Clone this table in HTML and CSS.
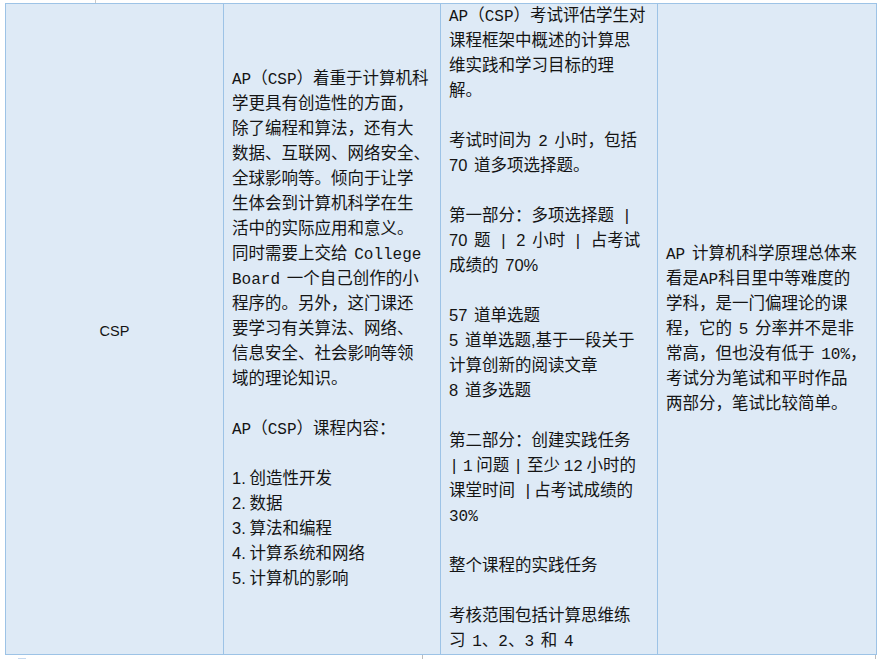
FILE: index.html
```html
<!DOCTYPE html>
<html lang="zh">
<head>
<meta charset="utf-8">
<link rel="stylesheet" href="styles.css">
</head>
<body>
<div class="topstrip"><span class="tick"></span></div>
<table class="grid">
  <colgroup>
    <col class="w1"><col class="w2"><col class="w3"><col class="w4">
  </colgroup>
  <tr>
    <td class="c1"><span class="csp">CSP</span></td>
    <td class="c2">
      <div class="ln"><span class="m">AP</span>（<span class="m">CSP</span>）着重于计算机科</div>
      <div class="ln">学更具有创造性的方面，</div>
      <div class="ln">除了编程和算法，还有大</div>
      <div class="ln">数据、互联网、网络安全、</div>
      <div class="ln">全球影响等。倾向于让学</div>
      <div class="ln">生体会到计算机科学在生</div>
      <div class="ln">活中的实际应用和意义。</div>
      <div class="ln">同时需要上交给 <span class="m">College</span></div>
      <div class="ln"><span class="m">Board</span> 一个自己创作的小</div>
      <div class="ln">程序的。另外，这门课还</div>
      <div class="ln">要学习有关算法、网络、</div>
      <div class="ln">信息安全、社会影响等领</div>
      <div class="ln">域的理论知识。</div>
      <div class="ln"></div>
      <div class="ln"><span class="m">AP</span>（<span class="m">CSP</span>）课程内容：</div>
      <div class="ln"></div>
      <div class="ln tight"><span class="s">1.</span> 创造性开发</div>
      <div class="ln tight"><span class="s">2.</span> 数据</div>
      <div class="ln tight"><span class="s">3.</span> 算法和编程</div>
      <div class="ln tight"><span class="s">4.</span> 计算系统和网络</div>
      <div class="ln tight"><span class="s">5.</span> 计算机的影响</div>
    </td>
    <td class="c3">
      <div class="ln"><span class="m">AP</span>（<span class="m">CSP</span>）考试评估学生对</div>
      <div class="ln">课程框架中概述的计算思</div>
      <div class="ln">维实践和学习目标的理</div>
      <div class="ln">解。</div>
      <div class="ln"></div>
      <div class="ln">考试时间为 <span class="m">2</span> 小时，包括</div>
      <div class="ln"><span class="s">70</span> 道多项选择题。</div>
      <div class="ln"></div>
      <div class="ln">第一部分：多项选择题 <span class="p">|</span></div>
      <div class="ln"><span class="s">70</span> 题 <span class="p">|</span> <span class="s">2</span> 小时 <span class="p">|</span> 占考试</div>
      <div class="ln">成绩的 <span class="s">70%</span></div>
      <div class="ln"></div>
      <div class="ln"><span class="s">57</span> 道单选题</div>
      <div class="ln"><span class="s">5</span> 道单选题<span class="s">,</span>基于一段关于</div>
      <div class="ln">计算创新的阅读文章</div>
      <div class="ln"><span class="s">8</span> 道多选题</div>
      <div class="ln"></div>
      <div class="ln">第二部分：创建实践任务</div>
      <div class="ln tight"><span class="p">|</span> <span class="m">1</span> 问题 <span class="p">|</span> 至少 <span class="m">12</span> 小时的</div>
      <div class="ln">课堂时间 <span class="p">|</span>占考试成绩的</div>
      <div class="ln"><span class="m">30%</span></div>
      <div class="ln"></div>
      <div class="ln">整个课程的实践任务</div>
      <div class="ln"></div>
      <div class="ln">考核范围包括计算思维练</div>
      <div class="ln">习 <span class="m">1</span>、<span class="m">2</span>、<span class="m">3</span> 和 <span class="m">4</span></div>
    </td>
    <td class="c4">
      <div class="ln"><span class="m">AP</span> 计算机科学原理总体来</div>
      <div class="ln">看是<span class="m">AP</span>科目里中等难度的</div>
      <div class="ln">学科，是一门偏理论的课</div>
      <div class="ln">程，它的 <span class="m">5</span> 分率并不是非</div>
      <div class="ln">常高，但也没有低于 <span class="m">10%</span>，</div>
      <div class="ln">考试分为笔试和平时作品</div>
      <div class="ln">两部分，笔试比较简单。</div>
    </td>
  </tr>
</table>
<div class="botstrip">
  <span class="mark"></span>
  <span class="vline first"></span>
  <span class="vline second"></span>
</div>
</body>
</html>
```
FILE: styles.css
```css
html, body {
  margin: 0;
  padding: 0;
  background: #ffffff;
}
body {
  width: 879px;
  height: 659px;
  overflow: hidden;
  font-family: "Noto Sans CJK SC", "Liberation Sans", sans-serif;
  font-size: 16.5px;
  color: #141414;
}
.topstrip {
  height: 3px;
  display: flex;
}
.tick {
  margin-left: 95px;
  width: 1px;
  height: 3px;
  background: #c9c9c9;
}
.grid {
  margin-left: 5px;
  border-collapse: collapse;
  table-layout: fixed;
  width: 871px;
  background: #deeaf6;
}
.w1 { width: 218px; }
.w2 { width: 217px; }
.w3 { width: 217px; }
.w4 { width: 219px; }
.grid td {
  border: 1px solid #9dc3e6;
  vertical-align: middle;
  padding: 0 0 0 8px;
  height: 650px;
  overflow: hidden;
}
.grid td.c1 {
  text-align: center;
  padding: 0;
}
.csp {
  font-family: "Liberation Sans", Arial, sans-serif;
  font-size: 14.5px;
}
.ln {
  height: 21px;
  line-height: 21px;
  padding-bottom: 4px;
  white-space: nowrap;
  word-spacing: 3px;
}
.ln.tight {
  word-spacing: 0;
}
.m {
  font-family: "Liberation Mono", monospace;
  font-size: 16px;
  word-spacing: 0;
}
.s {
  font-family: "Liberation Sans", sans-serif;
}
.p {
  font-family: "Liberation Sans", sans-serif;
  font-weight: 300;
  padding: 0 4px;
}
.tight .p {
  padding: 0 3px;
}
.botstrip {
  display: flex;
  height: 6px;
  align-items: flex-end;
}
.mark {
  margin-left: 18px;
  width: 8px;
  height: 3px;
  background: #c6d9ef;
}
.vline {
  width: 1px;
  height: 6px;
  background: #bdbdbd;
}
.first { margin-left: 396px; }
.second { margin-left: 452px; }
```
